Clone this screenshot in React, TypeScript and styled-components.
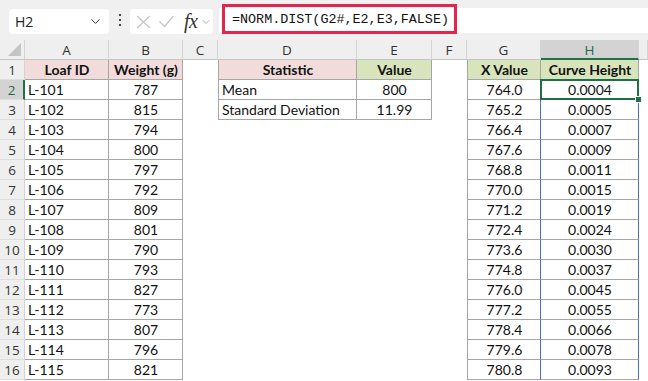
import React from 'react';
import styled, { createGlobalStyle } from 'styled-components';
import { ChevronDown } from 'lucide-react';

const GlobalStyle = createGlobalStyle`
  body {
    margin: 0;
    background: #ffffff;
    font-family: "Lato", "Liberation Sans", sans-serif;
  }
`;

const Sheet = styled.div`
  width: 648px;
  height: 381px;
  overflow: hidden;
  background: #ffffff;
`;

const Toolbar = styled.div`
  height: 40px;
  background: #f0f0f0;
  display: flex;
  align-items: flex-start;
  padding-left: 9px;
  box-sizing: border-box;
`;

const NameBox = styled.div`
  margin-top: 9px;
  width: 100px;
  height: 25px;
  box-sizing: border-box;
  background: #ffffff;
  border-radius: 4px;
  display: flex;
  align-items: center;
  justify-content: space-between;
  padding: 0 6px 0 6px;
  font-family: "Open Sans", "Noto Sans", sans-serif;
  font-size: 14px;
  color: #222;
`;

const Dots = styled.div`
  width: 21px;
  height: 40px;
  display: flex;
  flex-direction: column;
  align-items: center;
  justify-content: center;
  gap: 3px;
`;

const Dot = styled.span`
  width: 2px;
  height: 2px;
  background: #444;
`;

const FxBox = styled.div`
  margin-top: 9px;
  width: 83px;
  height: 25px;
  box-sizing: border-box;
  background: #ffffff;
  border-radius: 4px;
  display: flex;
  align-items: center;
  padding-left: 6px;
  color: #c4c4c4;
`;

const IconSlot = styled.span<{ $gap: number }>`
  display: flex;
  margin-right: ${p => p.$gap}px;
`;

const FxLabel = styled.span`
  font-family: "Liberation Serif", serif;
  font-style: italic;
  font-size: 20px;
  line-height: 1;
  color: #333;
  margin-right: 3px;
  margin-top: -2px;
  letter-spacing: -0.5px;
`;

const FormulaArea = styled.div`
  margin-top: 8px;
  margin-left: 6px;
  flex: 1;
  height: 25px;
  background: #ffffff;
  display: flex;
  align-items: stretch;
`;

const Highlight = styled.div`
  margin: -4px 0 -1px 3px;
  width: 235px;
  box-sizing: border-box;
  border: 3px solid #e2264f;
  display: flex;
  align-items: center;
  padding-left: 7px;
  font-family: "Liberation Mono", monospace;
  font-size: 13.4px;
  color: #111;
`;

const Grid = styled.div`
  display: grid;
  grid-template-columns: 25px 84px 74px 35px 139px 75px 35px 74px 98px 9px;
  grid-auto-rows: 20px;
`;

const HeadBase = styled.div`
  background: #efefef;
  box-sizing: border-box;
  display: flex;
  align-items: center;
  justify-content: center;
  font-family: "Open Sans", "Noto Sans", sans-serif;
  font-size: 13.5px;
  color: #333;
`;

const Corner = styled(HeadBase)`
  border-right: 1px solid #d4d4d4;
  border-bottom: 1px solid #c6c6c6;
  justify-content: flex-end;
  align-items: flex-end;
  padding: 0 3px 3px 0;
`;

const ColHead = styled(HeadBase)<{ $active?: boolean }>`
  border-right: 1px solid #d4d4d4;
  border-bottom: ${p => (p.$active ? '2px solid #1e7145' : '1px solid #c6c6c6')};
  background: ${p => (p.$active ? '#d3d3d3' : '#efefef')};
  color: ${p => (p.$active ? '#1e6b47' : '#333')};
  padding-top: ${p => (p.$active ? '1px' : '0')};
`;

const RowHead = styled(HeadBase)<{ $active?: boolean }>`
  border-right: ${p => (p.$active ? '2px solid #1e7145' : '1px solid #d4d4d4')};
  border-bottom: 1px solid #dedede;
  background: ${p => (p.$active ? '#d3d3d3' : '#efefef')};
  color: ${p => (p.$active ? '#1e6b47' : '#333')};
`;

const Cell = styled.div<{
  $fill?: string;
  $bold?: boolean;
  $align?: 'left' | 'center';
  $box?: boolean;
  $left?: boolean;
  $spill?: boolean;
  $selected?: boolean;
}>`
  position: relative;
  box-sizing: border-box;
  display: flex;
  align-items: center;
  justify-content: ${p => (p.$align === 'left' ? 'flex-start' : 'center')};
  padding: 0 2px 0 3px;
  background: ${p => p.$fill || '#ffffff'};
  font-size: 14px;
  font-weight: ${p => (p.$bold ? 700 : 400)};
  color: #111;
  white-space: nowrap;
  border-bottom: ${p => (p.$box ? '1px solid #a6a6a6' : '0')};
  border-right: ${p => (p.$spill ? '1px solid #4472c4' : p.$box ? '1px solid #a6a6a6' : '0')};
  border-left: ${p => (p.$spill ? '1px solid #4472c4' : p.$left ? '1px solid #a6a6a6' : '0')};
  margin-left: ${p => (p.$spill ? '-1px' : '0')};

  ${p =>
    p.$selected &&
    `
    &::after {
      content: '';
      position: absolute;
      left: -1px;
      top: -1px;
      right: -1px;
      bottom: -1px;
      border: 2px solid #1e7145;
      z-index: 2;
    }
    &::before {
      content: '';
      position: absolute;
      right: -4px;
      bottom: -4px;
      width: 5px;
      height: 5px;
      background: #1e7145;
      border: 1px solid #ffffff;
      z-index: 3;
    }
  `}
`;

const PINK = '#f2dcdb';
const GREEN = '#d8e4bc';

const weights = [787, 815, 794, 800, 797, 792, 809, 801, 790, 793, 827, 773, 807, 796, 821];
const heights = [
  '0.0004', '0.0005', '0.0007', '0.0009', '0.0011', '0.0015', '0.0019', '0.0024',
  '0.0030', '0.0037', '0.0045', '0.0055', '0.0066', '0.0078', '0.0093',
];
const stats: Record<number, [string, string]> = {
  0: ['Mean', '800'],
  1: ['Standard Deviation', '11.99'],
};

const columns = ['A', 'B', 'C', 'D', 'E', 'F', 'G', 'H', ''];

const Triangle = () => (
  <svg width="13" height="13" viewBox="0 0 13 13">
    <polygon points="13,0 13,13 0,13" fill="#c4c4c4" />
  </svg>
);

const CancelIcon = () => (
  <svg width="15" height="14" viewBox="0 0 15 14" fill="none" stroke="currentColor" strokeWidth="1.2">
    <path d="M1 1 L14 13 M14 1 L1 13" />
  </svg>
);

const EnterIcon = () => (
  <svg width="15" height="13" viewBox="0 0 15 13" fill="none" stroke="currentColor" strokeWidth="1.2">
    <path d="M0.5 6.5 L5.5 11.5 L14.5 1" />
  </svg>
);

export default function App() {
  return (
    <Sheet>
      <GlobalStyle />
      <Toolbar>
        <NameBox>
          <span>H2</span>
          <ChevronDown size={15} strokeWidth={1.6} color="#333" />
        </NameBox>
        <Dots>
          <Dot />
          <Dot />
          <Dot />
        </Dots>
        <FxBox>
          <IconSlot $gap={8}>
            <CancelIcon />
          </IconSlot>
          <IconSlot $gap={10}>
            <EnterIcon />
          </IconSlot>
          <FxLabel>fx</FxLabel>
          <ChevronDown size={12} strokeWidth={1.4} color="#888" />
        </FxBox>
        <FormulaArea>
          <Highlight>=NORM.DIST(G2#,E2,E3,FALSE)</Highlight>
        </FormulaArea>
      </Toolbar>

      <Grid>
        <Corner>
          <Triangle />
        </Corner>
        {columns.map((c, i) => (
          <ColHead key={i} $active={c === 'H'}>
            {c}
          </ColHead>
        ))}

        <RowHead>1</RowHead>
        <Cell $box $fill={PINK} $bold>Loaf ID</Cell>
        <Cell $box $fill={PINK} $bold>Weight (g)</Cell>
        <Cell />
        <Cell $box $left $fill={PINK} $bold>Statistic</Cell>
        <Cell $box $fill={GREEN} $bold>Value</Cell>
        <Cell />
        <Cell $box $left $fill={GREEN} $bold>X Value</Cell>
        <Cell $box $fill={GREEN} $bold>Curve Height</Cell>
        <Cell />

        {weights.map((w, i) => {
          const stat = stats[i];
          return (
            <React.Fragment key={i}>
              <RowHead $active={i === 0}>{i + 2}</RowHead>
              <Cell $box $align="left">L-{101 + i}</Cell>
              <Cell $box>{w}</Cell>
              <Cell />
              {stat ? (
                <>
                  <Cell $box $left $align="left">{stat[0]}</Cell>
                  <Cell $box>{stat[1]}</Cell>
                </>
              ) : (
                <>
                  <Cell />
                  <Cell />
                </>
              )}
              <Cell />
              <Cell $box $left>{(764 + 1.2 * i).toFixed(1)}</Cell>
              <Cell $box $spill={i > 0} $selected={i === 0}>{heights[i]}</Cell>
              <Cell />
            </React.Fragment>
          );
        })}
      </Grid>
    </Sheet>
  );
}
